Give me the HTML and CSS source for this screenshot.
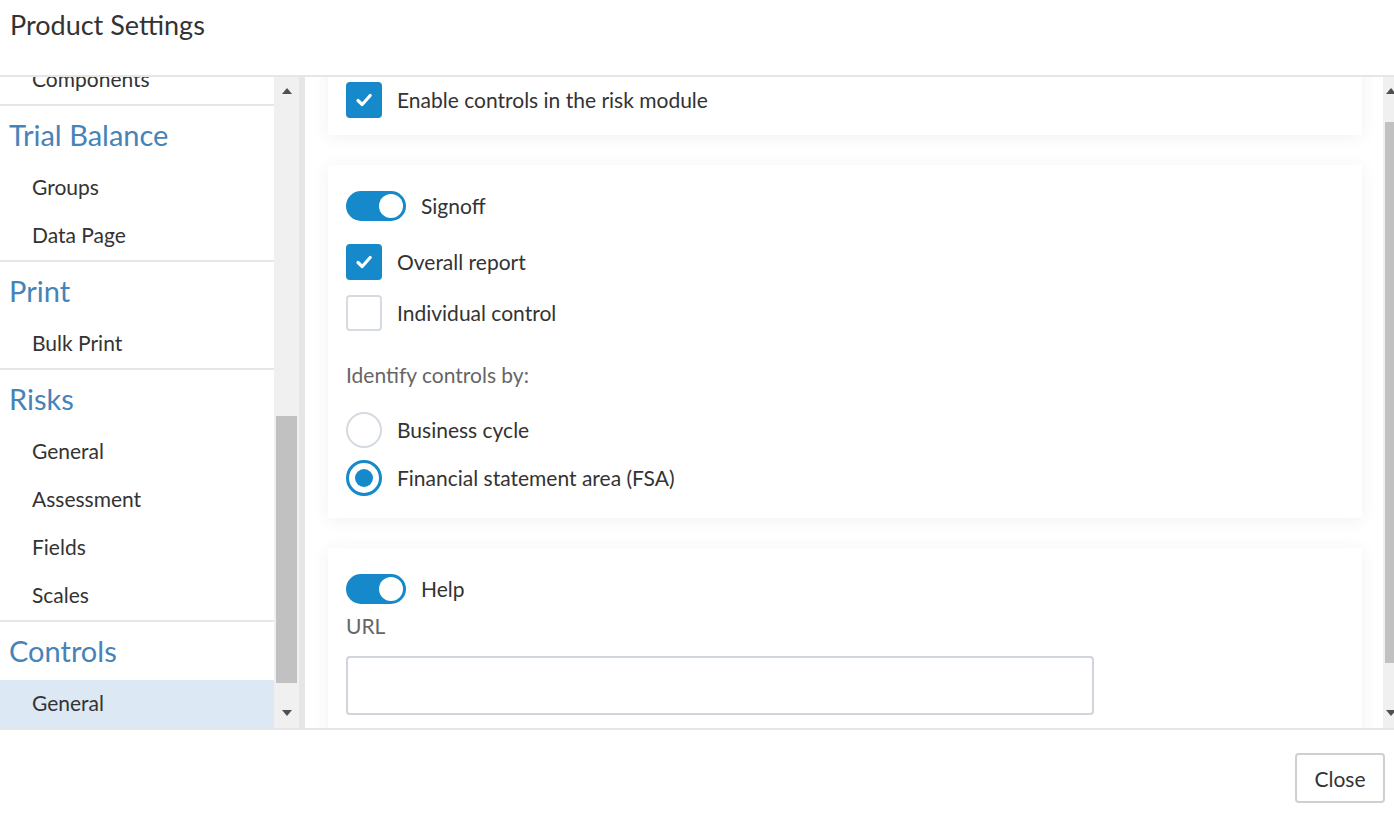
FILE: index.html
```html
<!DOCTYPE html>
<html lang="en">
<head>
<meta charset="utf-8">
<title>Product Settings</title>
<link rel="stylesheet" href="styles.css">
</head>
<body>
<div class="modal">
  <header class="modal-header">
    <h1 class="modal-title">Product Settings</h1>
  </header>

  <div class="modal-body">
    <nav class="sidebar">
      <div class="sidebar-scroll">
        <div class="sidebar-inner">
          <div class="nav-section">
            <div class="nav-item">Components</div>
          </div>
          <div class="nav-section">
            <div class="nav-heading">Trial Balance</div>
            <div class="nav-item">Groups</div>
            <div class="nav-item">Data Page</div>
          </div>
          <div class="nav-section">
            <div class="nav-heading">Print</div>
            <div class="nav-item">Bulk Print</div>
          </div>
          <div class="nav-section">
            <div class="nav-heading">Risks</div>
            <div class="nav-item">General</div>
            <div class="nav-item">Assessment</div>
            <div class="nav-item">Fields</div>
            <div class="nav-item">Scales</div>
          </div>
          <div class="nav-section">
            <div class="nav-heading">Controls</div>
            <div class="nav-item is-active">General</div>
          </div>
        </div>
      </div>
      <div class="scrollbar scrollbar-left">
        <div class="sb-btn"><span class="arrow-up"></span></div>
        <div class="sb-thumb sb-thumb-left"></div>
        <div class="sb-btn sb-btn-down"><span class="arrow-down"></span></div>
      </div>
    </nav>

    <div class="pane-divider"></div>

    <main class="content">
      <div class="content-scroll">
        <div class="content-inner">
          <section class="card card-first">
            <label class="row">
              <span class="checkbox is-checked">
                <svg viewBox="0 0 36 36" width="36" height="36"><path d="M12 18.5 L16.2 22.5 L24.2 13.5" fill="none" stroke="#fff" stroke-width="3.2" stroke-linecap="round" stroke-linejoin="round"/></svg>
              </span>
              <span class="label">Enable controls in the risk module</span>
            </label>
          </section>

          <section class="card">
            <div class="row row-toggle">
              <span class="toggle is-on"><span class="knob"></span></span>
              <span class="label">Signoff</span>
            </div>
            <label class="row row-check first-check">
              <span class="checkbox is-checked">
                <svg viewBox="0 0 36 36" width="36" height="36"><path d="M12 18.5 L16.2 22.5 L24.2 13.5" fill="none" stroke="#fff" stroke-width="3.2" stroke-linecap="round" stroke-linejoin="round"/></svg>
              </span>
              <span class="label">Overall report</span>
            </label>
            <label class="row row-check">
              <span class="checkbox"></span>
              <span class="label">Individual control</span>
            </label>
            <div class="field-label identify">Identify controls by:</div>
            <label class="row row-radio first-radio">
              <span class="radio"></span>
              <span class="label">Business cycle</span>
            </label>
            <label class="row row-radio">
              <span class="radio is-checked"><span class="dot"></span></span>
              <span class="label">Financial statement area (FSA)</span>
            </label>
          </section>

          <section class="card card-last">
            <div class="row row-toggle">
              <span class="toggle is-on"><span class="knob"></span></span>
              <span class="label">Help</span>
            </div>
            <div class="field-label url-label">URL</div>
            <div class="text-input"></div>
          </section>
        </div>
      </div>
      <div class="scrollbar scrollbar-right">
        <div class="sb-btn"><span class="arrow-up"></span></div>
        <div class="sb-thumb sb-thumb-right"></div>
        <div class="sb-btn sb-btn-down"><span class="arrow-down"></span></div>
      </div>
    </main>
  </div>

  <footer class="modal-footer">
    <button class="btn" type="button">Close</button>
  </footer>
</div>
</body>
</html>
```

FILE: styles.css
```css
* { box-sizing: border-box; }

html, body {
  margin: 0;
  padding: 0;
  background: #fff;
}

body {
  font-family: Lato, "Open Sans", "Liberation Sans", sans-serif;
  color: #333;
  width: 1394px;
  height: 813px;
  overflow: hidden;
}

.modal {
  display: flex;
  flex-direction: column;
  height: 813px;
}

/* Header */
.modal-header {
  height: 77px;
  border-bottom: 2px solid #e6e6e6;
  padding: 8px 0 0 10px;
  flex: none;
}

.modal-title {
  margin: 0;
  font-size: 27px;
  line-height: 34px;
  font-weight: 400;
  color: #333;
}

/* Body */
.modal-body {
  flex: none;
  height: 651px;
  display: flex;
  overflow: hidden;
}

.sidebar {
  display: flex;
  flex: none;
  width: 299px;
}

.sidebar-scroll {
  width: 274px;
  overflow: hidden;
}

.sidebar-inner {
  margin-top: -21px;
}

.nav-section {
  border-bottom: 2px solid #e6e6e6;
}

.nav-heading {
  height: 58px;
  line-height: 57px;
  padding-left: 9px;
  font-size: 29px;
  color: #4683b8;
}

.nav-item {
  height: 48px;
  line-height: 46px;
  padding-left: 32px;
  font-size: 21px;
  color: #333;
}

.nav-item.is-active {
  background: #dce8f3;
}

/* Scrollbars */
.scrollbar {
  flex: none;
  display: flex;
  flex-direction: column;
  background: #f0f0f0;
  height: 651px;
}

.scrollbar-left {
  width: 25px;
}

.scrollbar-right {
  width: 11px;
  overflow: hidden;
}

.sb-btn {
  height: 28px;
  display: flex;
  align-items: center;
  justify-content: center;
  flex: none;
}

.sb-btn-down {
  height: 30px;
  margin-top: auto;
}

.scrollbar-right .sb-btn {
  justify-content: flex-start;
  padding-left: 3px;
}

.arrow-up {
  width: 0;
  height: 0;
  border-left: 5.5px solid transparent;
  border-right: 5.5px solid transparent;
  border-bottom: 6px solid #505050;
}

.arrow-down {
  width: 0;
  height: 0;
  border-left: 5.5px solid transparent;
  border-right: 5.5px solid transparent;
  border-top: 6px solid #505050;
}

.sb-thumb {
  background: #c1c1c1;
  flex: none;
}

.sb-thumb-left {
  margin: 311px 2px 0 2px;
  height: 267px;
}

.sb-thumb-right {
  margin: 17px 0 0 2px;
  height: 541px;
}

.pane-divider {
  flex: none;
  width: 6px;
  background: #e6e6e6;
}

/* Content */
.content {
  flex: 1;
  display: flex;
  min-width: 0;
}

.content-scroll {
  flex: 1;
  overflow: hidden;
  padding: 0 21px 0 23px;
}

.content-inner {
  display: flex;
  flex-direction: column;
  gap: 30px;
}

.card {
  background: #fff;
  box-shadow: 0 2px 16px rgba(40, 50, 70, 0.07);
  padding: 26px 18px 22px;
}

.card-first {
  margin-top: -21px;
  padding-bottom: 17px;
}

.card-last {
  padding-bottom: 40px;
}

.row {
  display: flex;
  align-items: center;
  gap: 15px;
}

.label {
  font-size: 21px;
  color: #333;
  line-height: 24px;
  padding-bottom: 1px;
}

.checkbox {
  width: 36px;
  height: 36px;
  border-radius: 4px;
  border: 2px solid #d5dbe1;
  flex: none;
  background: #fff;
  position: relative;
}

.checkbox.is-checked {
  border: none;
  background: #1589c9;
}

.checkbox svg {
  display: block;
}

.toggle {
  width: 60px;
  height: 30px;
  border-radius: 15px;
  background: #1589c9;
  display: flex;
  align-items: center;
  justify-content: flex-end;
  padding-right: 3px;
  flex: none;
}

.toggle .knob {
  width: 24px;
  height: 24px;
  border-radius: 50%;
  background: #fff;
}

.first-check {
  margin-top: 23px;
}

.row-check + .row-check {
  margin-top: 15px;
}

.field-label {
  font-size: 21px;
  color: #666;
  line-height: 24px;
}

.identify {
  margin-top: 32px;
}

.first-radio {
  margin-top: 25px;
}

.row-radio + .row-radio {
  margin-top: 12px;
}

.radio {
  width: 36px;
  height: 36px;
  border-radius: 50%;
  border: 2px solid #d5dbe1;
  flex: none;
  display: flex;
  align-items: center;
  justify-content: center;
}

.radio.is-checked {
  border: 3px solid #1589c9;
}

.radio .dot {
  width: 18px;
  height: 18px;
  border-radius: 50%;
  background: #1589c9;
}

.url-label {
  margin-top: 10px;
}

.text-input {
  margin-top: 18px;
  width: 748px;
  height: 59px;
  border: 2px solid #d0d5dc;
  border-radius: 4px;
  background: #fff;
}

/* Footer */
.modal-footer {
  flex: 1;
  border-top: 2px solid #e6e6e6;
  display: flex;
  justify-content: flex-end;
  align-items: flex-start;
  padding: 23px 9px 0 0;
}

.btn {
  font-family: Lato, "Open Sans", "Liberation Sans", sans-serif;
  width: 90px;
  height: 50px;
  border: 2px solid #cfcfcf;
  border-radius: 4px;
  background: #fff;
  color: #333;
  font-size: 21px;
  padding: 0;
  cursor: pointer;
}
```
